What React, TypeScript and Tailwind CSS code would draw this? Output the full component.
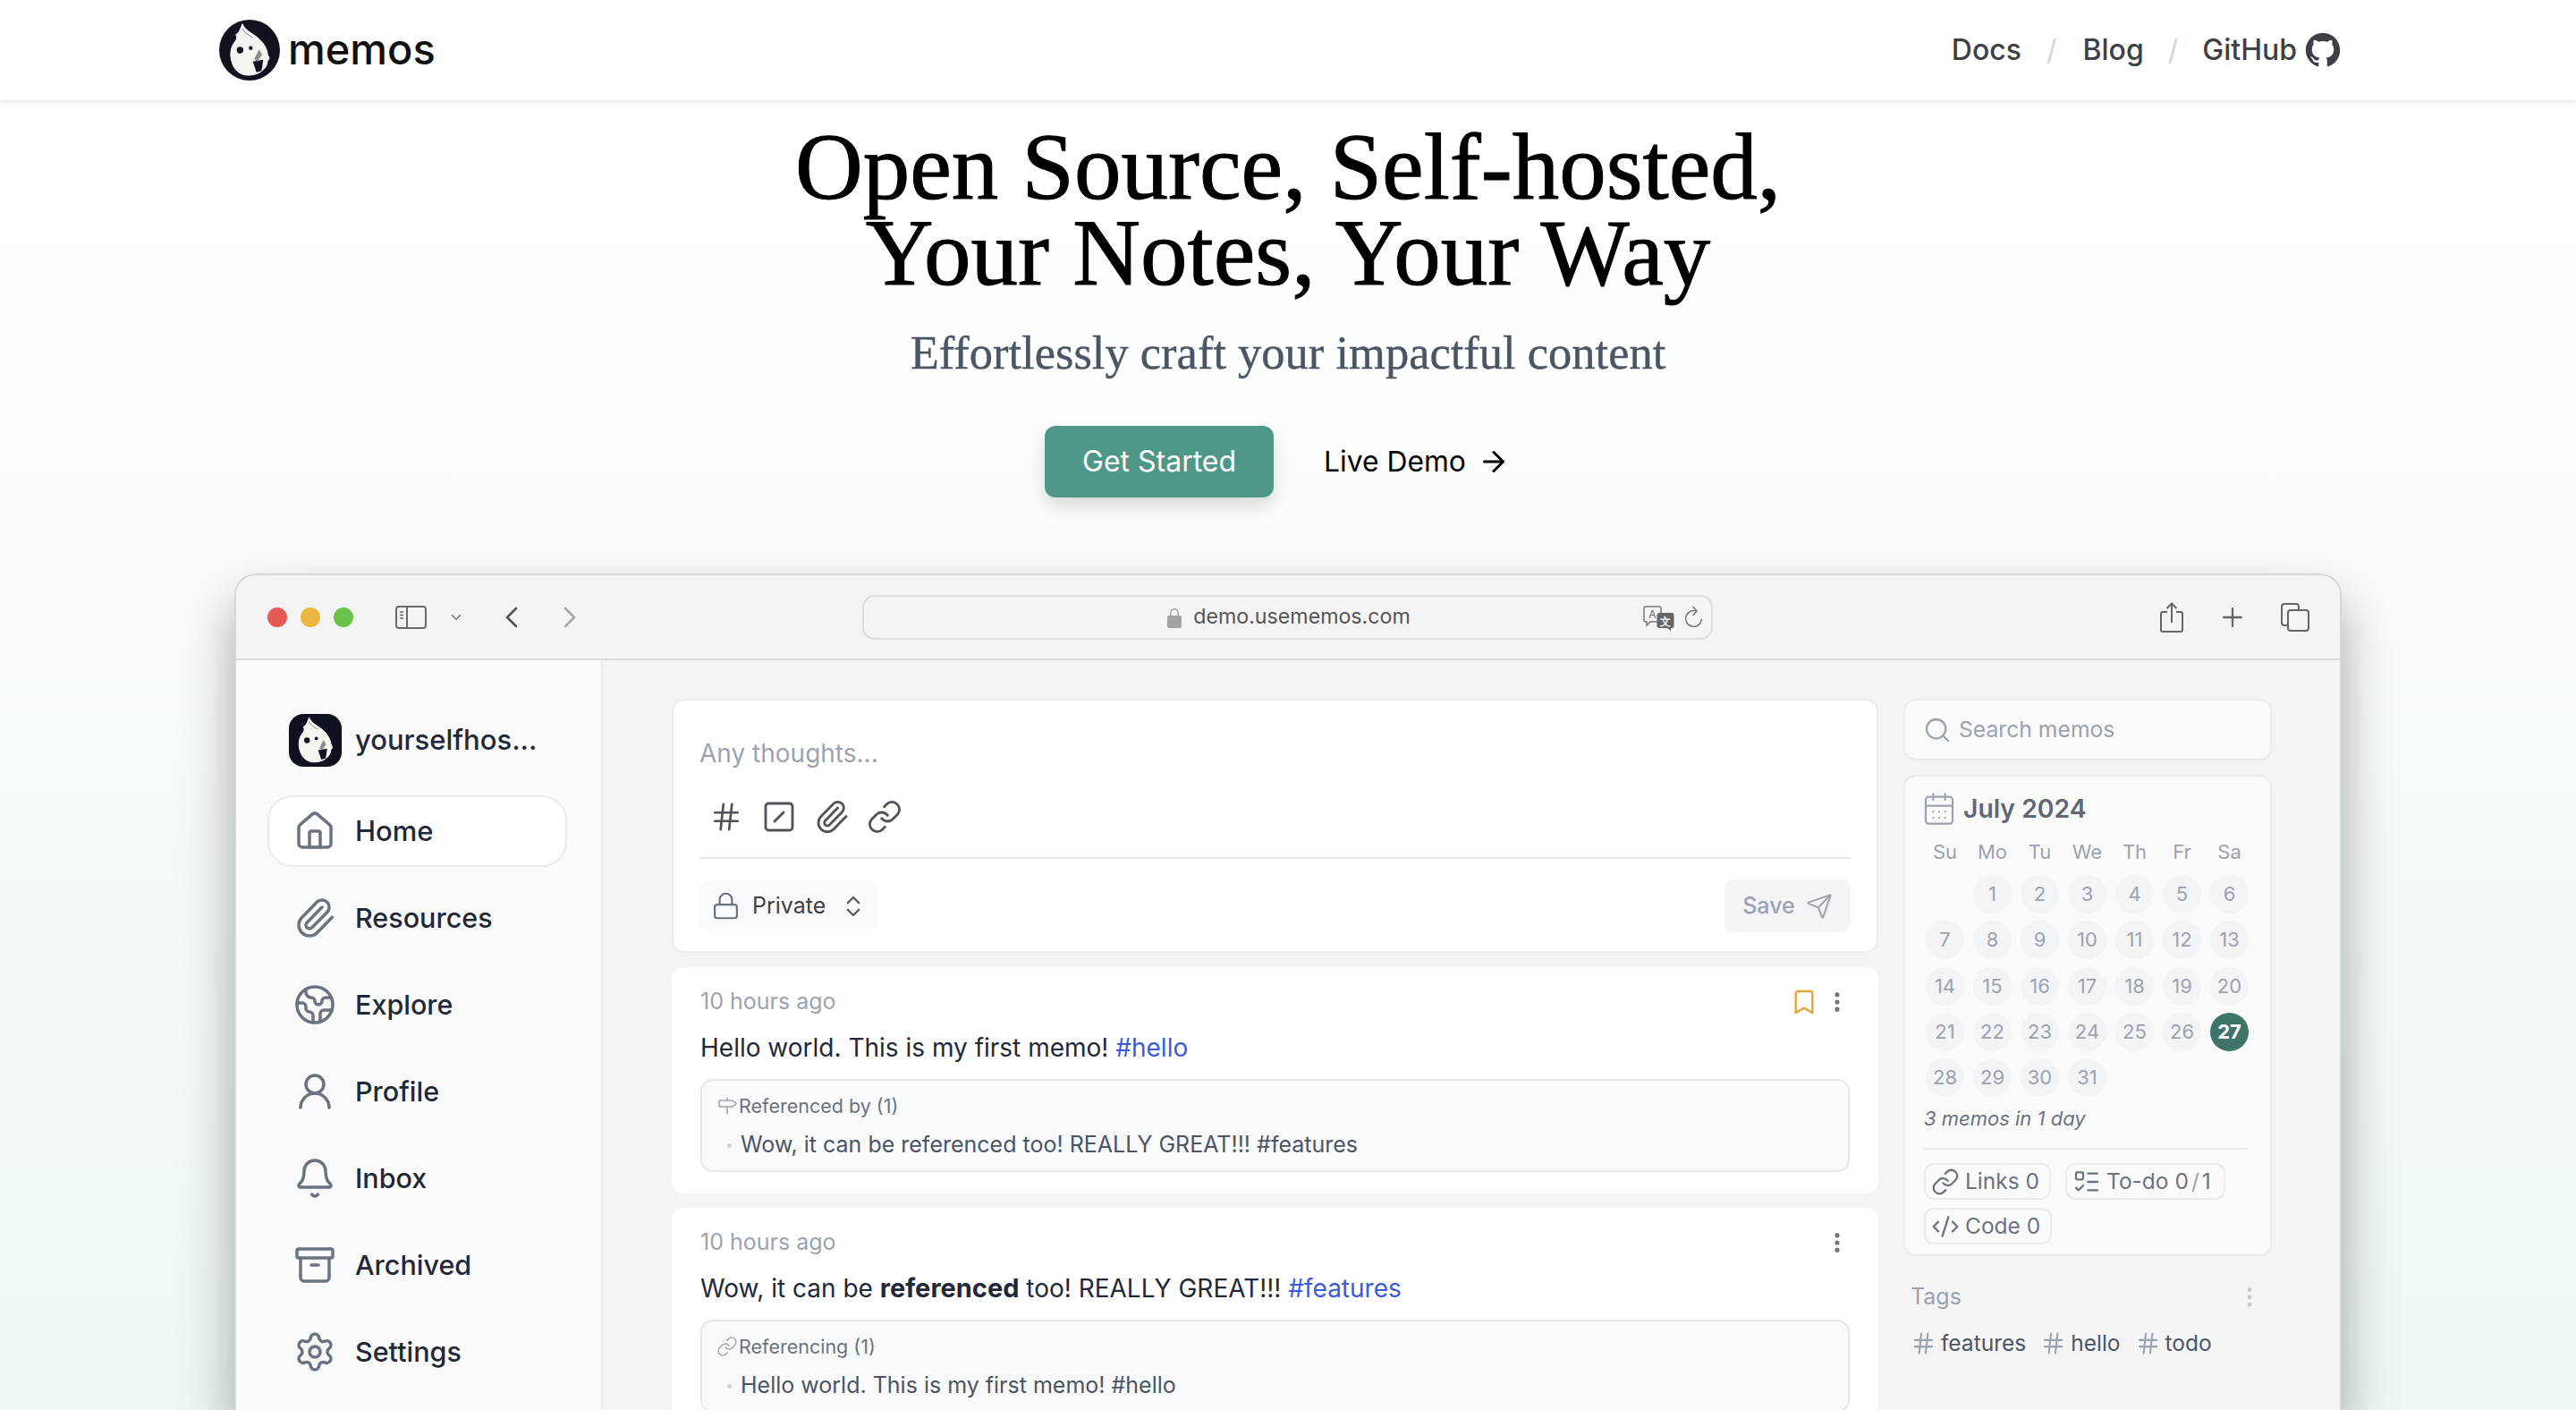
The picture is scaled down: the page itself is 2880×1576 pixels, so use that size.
import React from "react";
import {
  House, Paperclip, Earth, UserRound, Bell, Archive, Settings, Hash, SquareSlash, Link, Lock,
  ChevronsUpDown, Send, Bookmark, EllipsisVertical, Milestone, Search, CalendarDays,
  ListTodo, CodeXml, ArrowRight, ChevronLeft, ChevronRight, ChevronDown, Plus,
} from "lucide-react";

function Bird() {
  return (
    <>
      <path d="M78 14C84 30 100 40 118 52C142 68 160 92 163 118C170 128 168 136 162 138C162 160 140 184 103 186C74 188 52 172 44 146C34 118 38 90 56 70C60 62 60 56 56 50C66 46 72 32 78 14Z" fill="#f4f4f0" stroke="#fff" strokeWidth="3" />
      <path d="M78 30C84 42 96 50 112 60" fill="none" stroke="#12121f" strokeWidth="3" opacity="0.5" />
      <circle cx="70" cy="102" r="11" fill="#12121f" />
      <circle cx="106" cy="95" r="6.5" fill="#12121f" />
      <path d="M113 140L148 134L142 172L125 176Z" fill="#12121f" />
      <path d="M118 132L134 100L144 118L128 140Z" fill="#8a8a8a" />
    </>
  );
}

function LogoCircle() {
  return (
    <svg viewBox="0 0 204 204" className="w-[68px] h-[68px] shrink-0">
      <circle cx="102" cy="102" r="102" fill="#12121f" />
      <Bird />
    </svg>
  );
}

function Avatar() {
  return (
    <svg viewBox="0 0 204 204" preserveAspectRatio="none" className="w-[59px] h-[59px] shrink-0">
      <rect width="204" height="204" rx="56" fill="#0f1020" />
      <Bird />
    </svg>
  );
}

function GitHubMark() {
  return (
    <svg viewBox="0 0 24 24" className="w-[40px] h-[42px] ml-[9px]" fill="#3f3f46">
      <path d="M12 .5C5.65.5.5 5.65.5 12c0 5.08 3.29 9.38 7.86 10.9.58.1.79-.25.79-.56v-2.14c-3.2.7-3.87-1.36-3.87-1.36-.52-1.33-1.28-1.68-1.28-1.68-1.04-.71.08-.7.08-.7 1.15.08 1.76 1.19 1.76 1.19 1.03 1.76 2.69 1.25 3.34.95.1-.74.4-1.25.73-1.54-2.55-.29-5.24-1.28-5.24-5.68 0-1.25.45-2.28 1.18-3.08-.12-.29-.51-1.46.11-3.04 0 0 .96-.31 3.16 1.18a11 11 0 0 1 5.76 0c2.2-1.49 3.16-1.18 3.16-1.18.62 1.58.23 2.75.11 3.04.74.8 1.18 1.83 1.18 3.08 0 4.41-2.69 5.38-5.25 5.67.41.36.78 1.06.78 2.14v3.17c0 .31.21.67.8.56A11.5 11.5 0 0 0 23.5 12C23.5 5.65 18.35.5 12 .5Z" />
    </svg>
  );
}

function SidebarToggle() {
  return (
    <svg viewBox="0 0 35 26" className="w-[35px] h-[26px]" fill="none" stroke="#6b6b6b" strokeWidth="2">
      <rect x="1" y="1" width="33" height="24" rx="3" />
      <path d="M13 1v24" />
      <path d="M5 7h4M5 10.5h4M5 14h4" strokeWidth="1.5" />
    </svg>
  );
}

function ShareIcon() {
  return (
    <svg viewBox="0 0 26 34" className="w-[26px] h-[34px]" fill="none" stroke="#666" strokeWidth="2">
      <path d="M8 11H3a2 2 0 0 0-2 2v18a2 2 0 0 0 2 2h20a2 2 0 0 0 2-2V13a2 2 0 0 0-2-2h-5" />
      <path d="M13 23V2M7.5 7 13 1.5 18.5 7" />
    </svg>
  );
}

function TabsIcon() {
  return (
    <svg viewBox="0 0 32 32" className="w-[32px] h-[32px]" fill="none" stroke="#666" strokeWidth="2">
      <path d="M7 25H4a3 3 0 0 1-3-3V4a3 3 0 0 1 3-3h13a3 3 0 0 1 3 3v3" />
      <rect x="8" y="8" width="23" height="23" rx="3" />
    </svg>
  );
}

function TranslateIcon() {
  return (
    <svg viewBox="0 0 35 28" className="w-[35px] h-[28px]">
      <path d="M3 1h15a2 2 0 0 1 2 2v13a2 2 0 0 1-2 2H8l-4 4v-4H3a2 2 0 0 1-2-2V3a2 2 0 0 1 2-2Z" fill="#f4f4f4" stroke="#777" strokeWidth="1.5" />
      <text x="10.5" y="14" fontSize="12" textAnchor="middle" fill="#666" fontFamily="Inter, sans-serif">A</text>
      <path d="M18 8h14a2.5 2.5 0 0 1 2.5 2.5v12a2.5 2.5 0 0 1-2.5 2.5h-1v3l-4-3h-9a2.5 2.5 0 0 1-2.5-2.5v-12A2.5 2.5 0 0 1 18 8Z" fill="#666" />
      <text x="25" y="22" fontSize="12" fontWeight="700" textAnchor="middle" fill="#f4f4f4" fontFamily="Inter, sans-serif">文</text>
    </svg>
  );
}

function RefreshIcon() {
  return (
    <svg viewBox="0 0 22 30" className="w-[21px] h-[28px]" fill="none" stroke="#777" strokeWidth="1.6">
      <path d="M14 6.5A9.5 9.5 0 1 0 20.5 16" />
      <path d="M10 1l5 5.5-5 5" />
    </svg>
  );
}

const NAV = [
  { label: "Resources", Icon: Paperclip },
  { label: "Explore", Icon: Earth },
  { label: "Profile", Icon: UserRound },
  { label: "Inbox", Icon: Bell },
  { label: "Archived", Icon: Archive },
  { label: "Settings", Icon: Settings },
];

function Sidebar() {
  return (
    <aside className="w-[410px] shrink-0 bg-[#fafafa] border-r-2 border-[#ececec] pt-[60px] pl-[35px]">
      <div className="flex items-center h-[59px] pl-[24px] gap-[15px]">
        <Avatar />
        <span className="text-[31px] font-medium text-[#1f2937] whitespace-nowrap">yourselfhos...</span>
      </div>
      <div className="mt-[32px] w-[335px] h-[80px] rounded-[28px] bg-white border-2 border-[#ebebeb] flex items-center pl-[27px] gap-[21px]">
        <House size={48} strokeWidth={1.75} className="text-[#6b7280]" />
        <span className="text-[31px] font-medium text-[#1f2937]">Home</span>
      </div>
      <nav className="flex flex-col mt-[17px] gap-[17px]">
        {NAV.map(({ label, Icon }) => (
          <div key={label} className="h-[80px] flex items-center pl-[29px] gap-[21px]">
            <Icon size={48} strokeWidth={1.75} className="text-[#6b7280]" />
            <span className="text-[30.5px] font-medium text-[#1f2937]">{label}</span>
          </div>
        ))}
      </nav>
    </aside>
  );
}

function ToolSlot({ children }: { children: React.ReactNode }) {
  return <div className="w-[59px] h-[34px] flex items-center justify-center">{children}</div>;
}

function Compose() {
  return (
    <section className="bg-white rounded-[14px] border-2 border-[#ececec] px-[29px] pt-[38px] pb-[21px]">
      <div className="h-[42px] flex items-center text-[28px] text-[#9ca3af]">Any thoughts...</div>
      <div className="mt-[33px] h-[34px] flex items-center text-[#52525b]">
        <ToolSlot><Hash size={38} strokeWidth={1.7} className="shrink-0" /></ToolSlot>
        <ToolSlot><SquareSlash size={40} strokeWidth={1.7} className="shrink-0" /></ToolSlot>
        <ToolSlot><Paperclip size={40} strokeWidth={1.7} className="shrink-0" /></ToolSlot>
        <ToolSlot><Link size={40} strokeWidth={1.7} className="shrink-0" /></ToolSlot>
      </div>
      <div className="mt-[28px] h-[2px] bg-[#e5e7eb]" />
      <div className="mt-[23px] flex items-center justify-between">
        <div className="h-[57px] w-[199px] rounded-[10px] bg-[#f9fafb] flex items-center pl-[13px] text-[#3f3f46]">
          <Lock size={33} strokeWidth={1.6} className="text-[#6b7280]" />
          <span className="ml-[13px] text-[25px]">Private</span>
          <ChevronsUpDown size={30} strokeWidth={1.7} className="ml-[16px] text-[#52525b]" />
        </div>
        <div className="h-[59px] w-[141px] rounded-[10px] bg-[#f3f4f6] flex items-center justify-center gap-[12px] text-[#9ca3af]">
          <span className="text-[25px] font-medium">Save</span>
          <Send size={30} strokeWidth={1.6} />
        </div>
      </div>
    </section>
  );
}

function RefBox({ Icon, label, text }: { Icon: typeof Link; label: string; text: string }) {
  return (
    <div className="mt-[15px] h-[104px] rounded-[14px] border-2 border-[#e5e7eb] bg-[#f9fafb] pl-[16px] pt-[16px] overflow-hidden">
      <div className="h-[24px] flex items-center gap-[1px] text-[21.5px] text-[#6b7280]">
        <Icon size={24} strokeWidth={1.5} className="text-[#9ca3af] shrink-0" />
        <span>{label}</span>
      </div>
      <div className="mt-[20px] h-[24px] flex items-center text-[25px] text-[#4b5563] whitespace-nowrap">
        <span className="w-[5px] h-[5px] rounded-full bg-[#d1d5db] ml-[12px] mr-[10px]" />
        <span>{text}</span>
      </div>
    </div>
  );
}

function MemoCard({ bookmarked, children, Icon, label, text }: {
  bookmarked?: boolean; children: React.ReactNode; Icon: typeof Link; label: string; text: string;
}) {
  return (
    <article className="bg-white rounded-[14px] px-[32px] pt-[23px] pb-[24px]">
      <div className="h-[32px] flex items-center justify-between text-[25px] text-[#9ca3af]">
        <span>10 hours ago</span>
        <div className="flex items-center gap-[7px] mr-0">
          {bookmarked && <Bookmark size={32} strokeWidth={1.8} className="text-[#e3a33d]" />}
          <EllipsisVertical size={28} strokeWidth={2.4} className="text-[#6b7280]" />
        </div>
      </div>
      <div className="mt-[15px] h-[40px] flex items-center text-[28px] text-[#1f2937] whitespace-pre">{children}</div>
      <RefBox Icon={Icon} label={label} text={text} />
    </article>
  );
}

const DAYS = ["Su", "Mo", "Tu", "We", "Th", "Fr", "Sa"];

function Calendar() {
  const cells: (number | null)[] = [null, ...Array.from({ length: 31 }, (_, i) => i + 1)];
  return (
    <section className="mt-[16px] h-[538px] rounded-[14px] border-2 border-[#ececec] bg-[#fafafa] px-[18px] pt-[19px]">
      <div className="flex items-center h-[34px] gap-[7px]">
        <CalendarDays size={40} strokeWidth={1.3} className="text-[#9ca3af]" />
        <span className="text-[28.3px] font-semibold text-[#5f6775]">July 2024</span>
      </div>
      <div className="grid grid-cols-7 w-[371px] mt-[18px]">
        {DAYS.map((d) => (
          <div key={d} className="h-[26px] flex items-center justify-center text-[22px] text-[#9ca3af]">{d}</div>
        ))}
      </div>
      <div className="grid grid-cols-7 w-[371px] mt-[13px] gap-y-[8.25px]">
        {cells.map((n, i) =>
          n === null ? (
            <div key={i} className="h-[43px]" />
          ) : (
            <div key={i} className="h-[43px] flex items-center justify-center">
              <div className={n === 27
                ? "w-[43px] h-[43px] rounded-full bg-[#3f7568] flex items-center justify-center text-[22px] font-bold text-white"
                : "w-[43px] h-[43px] rounded-full bg-[#f3f4f6] flex items-center justify-center text-[22px] text-[#9ca3af]"}>
                {n}
              </div>
            </div>
          )
        )}
      </div>
      <div className="mt-[10px] pl-[3px] h-[28px] flex items-center text-[22px] italic text-[#6b7280]">3 memos in 1 day</div>
      <div className="mt-[19px] ml-[3px] w-[363px] h-[2px] bg-[#ebebeb]" />
      <div className="mt-[15px] ml-[3px] flex flex-wrap gap-x-[16px] gap-y-[9px]">
        <Chip Icon={Link} w="w-[142px]">Links 0</Chip>
        <Chip Icon={ListTodo} w="w-[179px]">To-do 0<span className="mx-[3px] text-[#9ca3af]">/</span>1</Chip>
        <Chip Icon={CodeXml} w="w-[143px]">Code 0</Chip>
      </div>
    </section>
  );
}

function Chip({ Icon, w, children }: { Icon: typeof Link; w: string; children: React.ReactNode }) {
  return (
    <div className={`${w} h-[41px] rounded-[11px] border-2 border-[#ececec] flex items-center pl-[6px] gap-[6px] text-[24.5px] text-[#6b7280] whitespace-nowrap`}>
      <Icon size={32} strokeWidth={1.7} className="shrink-0" />
      <span>{children}</span>
    </div>
  );
}

function RightCol() {
  const tags = ["features", "hello", "todo"];
  return (
    <div className="w-[412px] shrink-0">
      <div className="h-[69px] rounded-[14px] border-2 border-[#ececec] bg-[#fafafa] flex items-center pl-[20px] gap-[8px] text-[#9ca3af]">
        <Search size={32} strokeWidth={1.7} />
        <span className="text-[24.7px]">Search memos</span>
      </div>
      <Calendar />
      <div className="mt-[28px] h-[36px] flex items-center justify-between pl-[8px] pr-[11px] text-[25px] text-[#9ca3af]">
        <span>Tags</span>
        <EllipsisVertical size={28} strokeWidth={2.2} className="text-[#c4c8cf]" />
      </div>
      <div className="mt-[18px] flex items-center pl-[8px] gap-[16px] h-[30px]">
        {tags.map((t) => (
          <div key={t} className="flex items-center gap-[5px] text-[24.5px] text-[#4b5563]">
            <Hash size={29} strokeWidth={1.7} className="text-[#9ca3af]" />
            <span>{t}</span>
          </div>
        ))}
      </div>
    </div>
  );
}

function BrowserWindow() {
  return (
    <div className="mt-[85px] mx-auto w-[2356px] flex-1 min-h-0 flex flex-col overflow-hidden rounded-t-[24px] border-x-2 border-t-2 border-[#d6d6d6] bg-[#f4f4f5] shadow-[0_30px_60px_rgba(0,0,0,0.34)]">
      <div className="h-[95px] shrink-0 bg-[#f4f4f4] border-b-2 border-[#dcdcdc] flex items-center pl-[35px] pr-[34px]">
        <span className="w-[22px] h-[22px] rounded-full bg-[#e55a54]" />
        <span className="ml-[15px] w-[22px] h-[22px] rounded-full bg-[#edb63d]" />
        <span className="ml-[15px] w-[22px] h-[22px] rounded-full bg-[#69c24a]" />
        <span className="ml-[47px]"><SidebarToggle /></span>
        <ChevronDown size={18} strokeWidth={2} className="ml-[24px] text-[#777]" />
        <ChevronLeft size={40} strokeWidth={1.6} className="ml-[33px] text-[#555]" />
        <ChevronRight size={40} strokeWidth={1.6} className="ml-[25px] text-[#a8a8a8]" />
        <div className="relative ml-[307px] w-[951px] h-[50px] rounded-[14px] border-2 border-[#dddddd] flex items-center justify-center pl-[3px] text-[23.2px] text-[#555]">
          <svg viewBox="0 0 16 24" className="w-[16px] h-[24px] mr-[13px]" fill="#a3a3a3">
            <path d="M3 11V7a5 5 0 0 1 10 0v4h-1.5V7a3.5 3.5 0 0 0-7 0v4Z" />
            <rect x="0" y="10" width="16" height="14" rx="2" />
          </svg>
          <span>demo.usememos.com</span>
          <div className="absolute right-[9px] top-[10px] flex items-center gap-[11px]">
            <TranslateIcon />
            <RefreshIcon />
          </div>
        </div>
        <div className="ml-auto flex items-center">
          <ShareIcon />
          <Plus size={34} strokeWidth={1.6} className="ml-[38px] text-[#666]" />
          <span className="ml-[37px]"><TabsIcon /></span>
        </div>
      </div>
      <div className="flex-1 min-h-0 flex overflow-hidden">
        <Sidebar />
        <div className="flex-1 min-w-0 flex pl-[77px] pt-[43px] gap-[28px]">
          <div className="w-[1349px] shrink-0 flex flex-col gap-[16px]">
            <Compose />
            <MemoCard bookmarked Icon={Milestone} label="Referenced by (1)" text="Wow, it can be referenced too! REALLY GREAT!!! #features">
              Hello world. This is my first memo! <span className="text-[#3b5bdb]">#hello</span>
            </MemoCard>
            <MemoCard Icon={Link} label="Referencing (1)" text="Hello world. This is my first memo! #hello">
              Wow, it can be <b className="font-bold text-[29px]">referenced</b> too! REALLY GREAT!!! <span className="text-[#3b5bdb]">#features</span>
            </MemoCard>
          </div>
          <RightCol />
        </div>
      </div>
    </div>
  );
}

export default function App() {
  return (
    <div className="w-[2880px] h-[1576px] overflow-hidden flex flex-col bg-gradient-to-b from-white from-[15%] to-[#eef7f5] [font-family:Inter,sans-serif]">
      <header className="h-[112px] shrink-0 bg-white shadow-[0_2px_5px_rgba(0,0,0,0.1)] flex items-center pl-[245px] pr-[263px]">
        <LogoCircle />
        <span className="ml-[9px] -mt-[2px] text-[47px] font-medium text-[#111]">memos</span>
        <nav className="ml-auto flex items-center text-[32px] font-medium text-[#3f3f46]">
          <span>Docs</span>
          <span className="ml-[28px] font-normal text-[#d1d5db]">/</span>
          <span className="ml-[29px]">Blog</span>
          <span className="ml-[27px] font-normal text-[#d1d5db]">/</span>
          <span className="ml-[27px]">GitHub</span>
          <GitHubMark />
        </nav>
      </header>
      <section className="shrink-0 flex flex-col items-center pt-[27px]">
        <h1 className="text-[105px] leading-[96px] text-center text-black [-webkit-text-stroke:1px_black] [font-family:'Liberation_Serif',serif]">
          Open Source, Self-hosted,<br />Your Notes, Your Way
        </h1>
        <p className="mt-[33px] h-[60px] flex items-center text-[52.5px] text-[#4b5563] [-webkit-text-stroke:0.4px_#4b5563] [font-family:'Liberation_Serif',serif]">
          Effortlessly craft your impactful content
        </p>
        <div className="mt-[52px] flex items-center mr-[24px]">
          <div className="w-[256px] h-[80px] rounded-[12px] bg-[#4f9788] shadow-[0_10px_20px_rgba(0,0,0,0.14)] flex items-center justify-center text-[32px] text-white">Get Started</div>
          <div className="ml-[56px] flex items-center text-[31.8px] text-black">
            <span>Live Demo</span>
            <ArrowRight size={36} strokeWidth={2} className="ml-[13px]" />
          </div>
        </div>
      </section>
      <BrowserWindow />
    </div>
  );
}
